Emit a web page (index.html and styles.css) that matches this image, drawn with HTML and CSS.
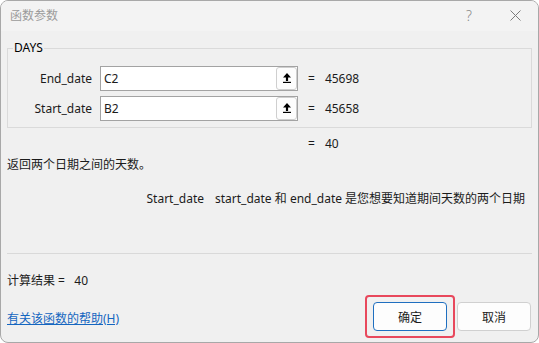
FILE: index.html
```html
<!DOCTYPE html>
<html lang="zh-CN">
<head>
    <meta charset="UTF-8">
    <title>函数参数</title>
    <link rel="stylesheet" href="styles.css">
</head>
<body>
    <div class="dialog">
        <div class="titlebar">
            <span class="title">函数参数</span>
            <div class="controls">
                <span class="ctl help">?</span>
                <span class="ctl close">
                    <svg width="11" height="11" viewBox="0 0 11 11">
                        <path d="M0.5 0.5 L10.5 10.5 M10.5 0.5 L0.5 10.5" stroke="#7c7c7c" stroke-width="1" fill="none"/>
                    </svg>
                </span>
            </div>
        </div>

        <div class="content">
            <fieldset class="args">
                <legend>DAYS</legend>
                <div class="arg-row">
                    <label class="arg-name">End_date</label>
                    <div class="ref-box">
                        <span class="ref-text">C2</span>
                        <span class="ref-btn">
                            <svg width="8" height="10" viewBox="0 0 8 10">
                                <polygon points="4,0 8,4.5 5.1,4.5 5.1,8 2.9,8 2.9,4.5 0,4.5" fill="#000"/>
                                <rect x="0" y="8.8" width="8" height="1.2" fill="#000"/>
                            </svg>
                        </span>
                    </div>
                    <span class="eq">=</span>
                    <span class="val">45698</span>
                </div>
                <div class="arg-row">
                    <label class="arg-name">Start_date</label>
                    <div class="ref-box">
                        <span class="ref-text">B2</span>
                        <span class="ref-btn">
                            <svg width="8" height="10" viewBox="0 0 8 10">
                                <polygon points="4,0 8,4.5 5.1,4.5 5.1,8 2.9,8 2.9,4.5 0,4.5" fill="#000"/>
                                <rect x="0" y="8.8" width="8" height="1.2" fill="#000"/>
                            </svg>
                        </span>
                    </div>
                    <span class="eq">=</span>
                    <span class="val">45658</span>
                </div>
            </fieldset>

            <div class="result-row">
                <span class="eq">=</span>
                <span class="val">40</span>
            </div>

            <p class="fn-desc">返回两个日期之间的天数。</p>

            <div class="param-desc">
                <span class="param-name">Start_date</span>
                <span class="param-text">start_date 和 end_date 是您想要知道期间天数的两个日期</span>
            </div>

            <div class="separator"></div>

            <div class="calc">计算结果 =&nbsp;&nbsp;&nbsp;40</div>

            <div class="footer">
                <a class="help-link" href="#">有关该函数的帮助(H)</a>
                <div class="buttons">
                    <span class="highlight">
                        <button class="btn primary">确定</button>
                    </span>
                    <button class="btn">取消</button>
                </div>
            </div>
        </div>
    </div>
</body>
</html>
```

FILE: styles.css
```css
* {
    margin: 0;
    padding: 0;
    box-sizing: border-box;
}

body {
    width: 539px;
    height: 343px;
    background: #ffffff;
    font-family: "Noto Sans", "Noto Sans CJK SC", sans-serif;
    font-size: 12px;
    line-height: 16px;
    color: #1b1b1b;
    overflow: hidden;
}

.dialog {
    width: 539px;
    height: 343px;
    border: 1px solid #a8a8a8;
    border-radius: 8px;
    background: #f0f0f0;
    overflow: hidden;
    display: flex;
    flex-direction: column;
}

/* barre de titre */
.titlebar {
    height: 30px;
    background: #f3f3f3;
    display: flex;
    align-items: center;
    justify-content: space-between;
    padding-left: 9px;
}

.title {
    color: #9b9b9b;
    margin-top: -1px;
}

.controls {
    display: flex;
    height: 100%;
}

.ctl {
    width: 46px;
    height: 100%;
    display: flex;
    align-items: center;
    justify-content: center;
}

.help {
    color: #8a8a8a;
    font-size: 14px;
    font-weight: 300;
}

.close svg {
    margin-top: -1px;
}

.content {
    padding: 0 6px;
    flex: 1;
}

/* groupe des arguments */
.args {
    margin-top: 9px;
    border: 1px solid #dadada;
    padding: 10px 0 6px 0;
    display: flex;
    flex-direction: column;
    gap: 5px;
}

.args legend {
    margin-left: 5px;
    padding: 0 1px;
    line-height: 16px;
    color: #000;
}

.arg-row {
    display: flex;
    align-items: center;
    height: 25px;
}

.arg-name {
    width: 84px;
    text-align: right;
    margin-right: 8px;
}

.ref-box {
    width: 198px;
    height: 25px;
    border: 1px solid #a3a3a3;
    background: #ffffff;
    display: flex;
    align-items: center;
    justify-content: space-between;
    padding: 0 0 0 3px;
}

.ref-btn {
    width: 21px;
    height: 23px;
    border: 1px solid #cfcfcf;
    border-radius: 3px;
    background: #fdfdfd;
    display: flex;
    align-items: center;
    justify-content: center;
    padding-bottom: 2px;
}

.eq {
    margin-left: 10px;
}

.val {
    margin-left: 10px;
}

.result-row {
    margin-top: 8px;
    padding-left: 291px;
    display: flex;
}

.fn-desc {
    margin-top: 5px;
}

.param-desc {
    margin-top: 18px;
    display: flex;
}

.param-name {
    width: 197px;
    text-align: right;
    margin-right: 11px;
}

.separator {
    margin-top: 46px;
    height: 1px;
    background: #d9d9d9;
}

.calc {
    margin-top: 19px;
}

.footer {
    margin-top: 6px;
    display: flex;
    align-items: center;
    justify-content: space-between;
}

.help-link {
    color: #1466c0;
    text-decoration: underline;
    margin-top: 4px;
}

.buttons {
    display: flex;
    align-items: center;
    gap: 2px;
    margin-right: 1px;
}

.highlight {
    display: block;
    border: 2px solid #e8485c;
    border-radius: 4px;
    padding: 5px 6px;
}

.btn {
    width: 74px;
    height: 29px;
    border: 1px solid #d0d0d0;
    border-radius: 4px;
    background: #fdfdfd;
    font-family: "Noto Sans", "Noto Sans CJK SC", sans-serif;
    font-size: 12px;
    color: #1b1b1b;
    display: block;
}

.btn.primary {
    border-color: #1f6fc0;
}
```
